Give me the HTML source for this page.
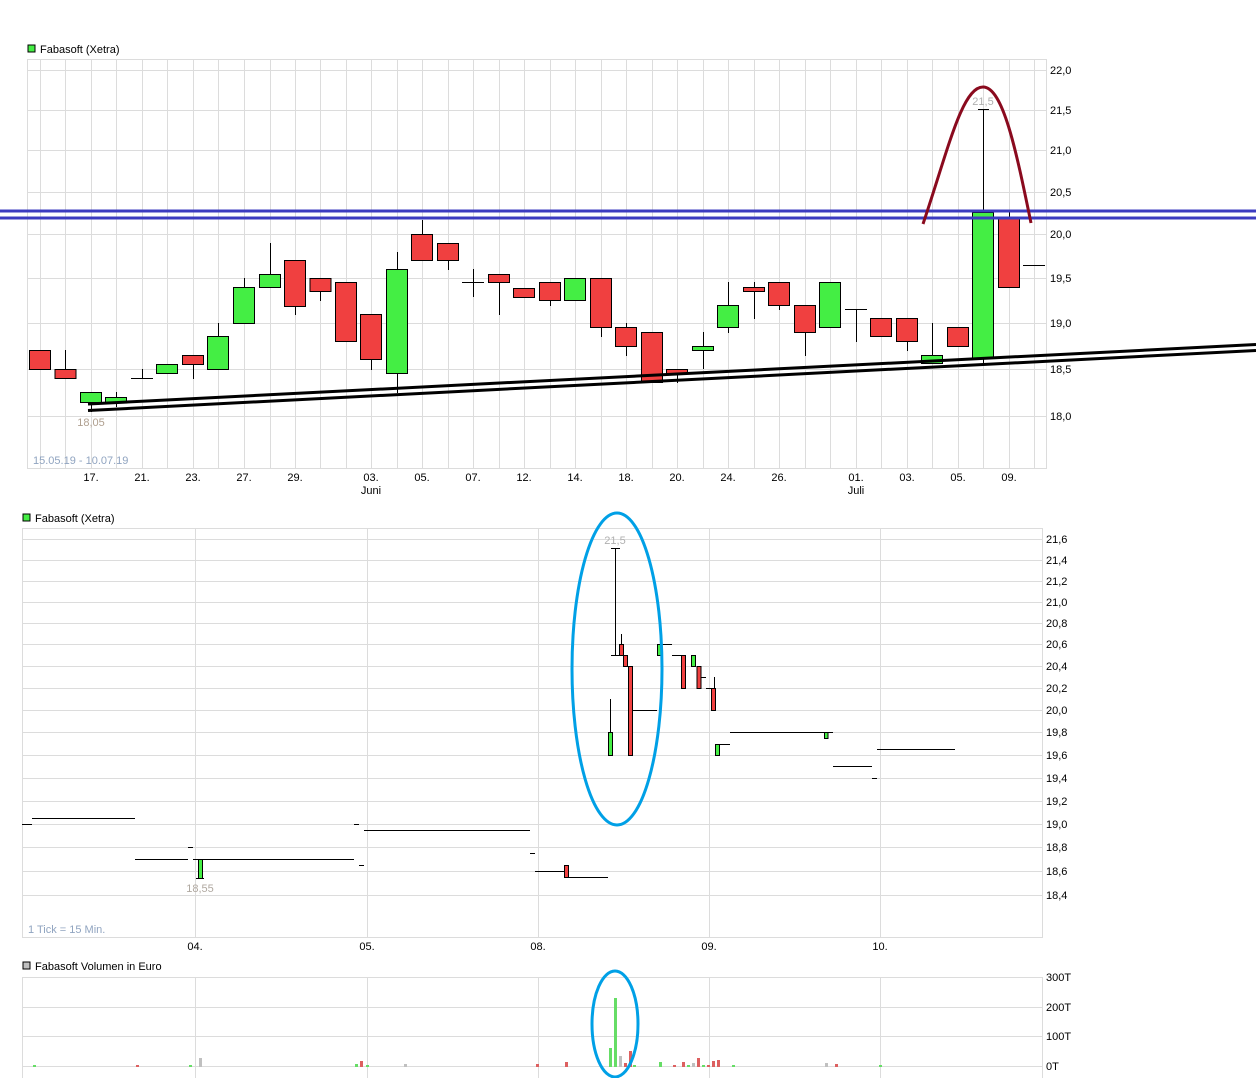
<!DOCTYPE html>
<html><head><meta charset="utf-8"><style>
html,body{margin:0;padding:0;background:#fff;width:1256px;height:1078px;overflow:hidden}
svg{display:block;font-family:"Liberation Sans",sans-serif;font-size:11px}
</style></head><body>
<svg width="1256" height="1078" viewBox="0 0 1256 1078" xmlns="http://www.w3.org/2000/svg">
<!-- ================= TOP CHART ================= -->
<rect x="28" y="45" width="7" height="7" fill="#44ee44" stroke="#000" stroke-width="1"/>
<text x="40" y="53" fill="#000">Fabasoft (Xetra)</text>
<g stroke="#dcdcdc" stroke-width="1" fill="none">
<rect x="27.5" y="59.5" width="1019" height="409"/>
<path d="M28 70.5H1047M28 110.5H1047M28 150.5H1047M28 192.5H1047M28 234.5H1047M28 278.5H1047M28 323.5H1047M28 369.5H1047M28 416.5H1047"/>
<path d="M40.5 59V469M65.5 59V469M91.5 59V469M116.5 59V469M142.5 59V469M167.5 59V469M193.5 59V469M218.5 59V469M244.5 59V469M270.5 59V469M295.5 59V469M320.5 59V469M346.5 59V469M371.5 59V469M397.5 59V469M422.5 59V469M448.5 59V469M473.5 59V469M499.5 59V469M524.5 59V469M550.5 59V469M575.5 59V469M601.5 59V469M626.5 59V469M652.5 59V469M677.5 59V469M703.5 59V469M728.5 59V469M754.5 59V469M779.5 59V469M805.5 59V469M830.5 59V469M856.5 59V469M881.5 59V469M907.5 59V469M932.5 59V469M958.5 59V469M983.5 59V469M1009.5 59V469M1034.5 59V469"/>
</g>
<!-- wicks -->
<g stroke="#000" stroke-width="1" fill="none">
<path d="M65.5 350V378M91.5 392V412M116.5 392V407M142.5 369V378M131 378.5H153M193.5 364V379M218.5 323V369M244.5 278V287M270.5 243V274M295.5 306V315M320.5 291V301M371.5 359V370M397.5 252V393M422.5 220V234M448.5 260V270M473.5 269V297M462 282.5H484M499.5 282V315M550.5 300V306M601.5 327V337M626.5 323V356M677.5 373V383M703.5 332V369M728.5 282V333M754.5 282V319M779.5 305V310M805.5 332V356M856.5 309V342M845 309.5H867M907.5 341V351M932.5 323V363M983.5 109V363M978 109.5H989M1009.5 212V218M1023 265.5H1045"/>
</g>
<!-- bodies -->
<g stroke="#000" stroke-width="1">
<g fill="#f04040">
<rect x="29.5" y="350.5" width="21" height="19"/>
<rect x="55" y="369.5" width="21" height="9"/>
<rect x="182.5" y="355.5" width="21" height="9"/>
<rect x="284.5" y="260.5" width="21" height="46"/>
<rect x="310" y="278.5" width="21" height="13"/>
<rect x="335.5" y="282.5" width="21" height="59"/>
<rect x="360.5" y="314.5" width="21" height="45"/>
<rect x="411.5" y="234.5" width="21" height="26"/>
<rect x="437.5" y="243.5" width="21" height="17"/>
<rect x="488.5" y="274.5" width="21" height="8"/>
<rect x="513.5" y="288.5" width="21" height="9"/>
<rect x="539.5" y="282.5" width="21" height="18"/>
<rect x="590.5" y="278.5" width="21" height="49"/>
<rect x="615.5" y="327.5" width="21" height="19"/>
<rect x="641.5" y="332.5" width="21" height="50"/>
<rect x="666.5" y="369.5" width="21" height="4"/>
<rect x="743.5" y="287.5" width="21" height="4"/>
<rect x="768.5" y="282.5" width="21" height="23"/>
<rect x="794.5" y="305.5" width="21" height="27"/>
<rect x="870.5" y="318.5" width="21" height="18"/>
<rect x="896.5" y="318.5" width="21" height="23"/>
<rect x="947.5" y="327.5" width="21" height="19"/>
<rect x="998.5" y="218.5" width="21" height="69"/>
</g>
<g fill="#44ee44">
<rect x="80.5" y="392.5" width="21" height="10"/>
<rect x="105.5" y="397.5" width="21" height="5"/>
<rect x="156.5" y="364.5" width="21" height="9"/>
<rect x="207.5" y="336.5" width="21" height="33"/>
<rect x="233.5" y="287.5" width="21" height="36"/>
<rect x="259.5" y="274.5" width="21" height="13"/>
<rect x="386.5" y="269.5" width="21" height="104"/>
<rect x="564.5" y="278.5" width="21" height="22"/>
<rect x="692.5" y="346.5" width="21" height="4"/>
<rect x="717.5" y="305.5" width="21" height="22"/>
<rect x="819.5" y="282.5" width="21" height="45"/>
<rect x="921.5" y="355.5" width="21" height="8"/>
<rect x="972.5" y="212.5" width="21" height="146"/>
</g>
</g>
<!-- trendlines -->
<line x1="88" y1="404" x2="1256" y2="344.5" stroke="#000" stroke-width="3"/>
<line x1="88" y1="410.5" x2="1256" y2="350.5" stroke="#000" stroke-width="3"/>
<!-- blue resistance -->
<line x1="0" y1="211" x2="1256" y2="211" stroke="#3c3cc0" stroke-width="3"/>
<line x1="0" y1="218" x2="1256" y2="218" stroke="#3c3cc0" stroke-width="3"/>
<!-- arc -->
<path d="M923 224 C948 150 962 87 983 87 C1003 87 1016 150 1031 223" stroke="#8a0a1e" stroke-width="3" fill="none"/>
<text x="983" y="105" fill="#b0b0b0" text-anchor="middle">21,5</text>
<text x="91" y="426" fill="#b0a090" text-anchor="middle">18,05</text>
<text x="33" y="464" fill="#90a4c0">15.05.19 - 10.07.19</text>
<g fill="#000">
<text x="1050" y="74">22,0</text><text x="1050" y="114">21,5</text><text x="1050" y="154">21,0</text><text x="1050" y="196">20,5</text><text x="1050" y="238">20,0</text><text x="1050" y="282">19,5</text><text x="1050" y="327">19,0</text><text x="1050" y="373">18,5</text><text x="1050" y="420">18,0</text>
</g>
<g fill="#000" text-anchor="middle">
<text x="91" y="481">17.</text><text x="142" y="481">21.</text><text x="193" y="481">23.</text><text x="244" y="481">27.</text><text x="295" y="481">29.</text><text x="371" y="481">03.</text><text x="422" y="481">05.</text><text x="473" y="481">07.</text><text x="524" y="481">12.</text><text x="575" y="481">14.</text><text x="626" y="481">18.</text><text x="677" y="481">20.</text><text x="728" y="481">24.</text><text x="779" y="481">26.</text><text x="856" y="481">01.</text><text x="907" y="481">03.</text><text x="958" y="481">05.</text><text x="1009" y="481">09.</text>
<text x="371" y="494">Juni</text><text x="856" y="494">Juli</text>
</g>

<!-- ================= MIDDLE CHART ================= -->
<rect x="23" y="514" width="7" height="7" fill="#44ee44" stroke="#000" stroke-width="1"/>
<text x="35" y="522" fill="#000">Fabasoft (Xetra)</text>
<g stroke="#dcdcdc" stroke-width="1" fill="none">
<rect x="22.5" y="528.5" width="1020" height="409"/>
<path d="M23 539.5H1043M23 560.5H1043M23 581.5H1043M23 602.5H1043M23 623.5H1043M23 644.5H1043M23 666.5H1043M23 688.5H1043M23 710.5H1043M23 732.5H1043M23 755.5H1043M23 778.5H1043M23 801.5H1043M23 824.5H1043M23 847.5H1043M23 871.5H1043M23 895.5H1043"/>
<path d="M195.5 528V938M367.5 528V938M538.5 528V938M709.5 528V938M880.5 528V938"/>
</g>
<g stroke="#000" stroke-width="1" fill="none">
<path d="M22 824.5H32M32 818.5H135M135 859.5H188M188 847.5H193M193 859.5H354M354 824.5H359M359 865.5H364M364 830.5H530M530 853.5H535M535 871.5H565M569 877.5H608M196 878.5H204M610.5 699V732M615.5 548V655M611 548.5H620M611 655.5H620M621.5 634V644M633 710.5H657M662 644.5H672M672 655.5H681M701 677.5H706M706 688.5H712M714.5 677V688M720 744.5H730M730 732.5H833M833 766.5H872M872 778.5H877M877 749.5H955"/>
</g>
<g stroke="#000" stroke-width="1">
<g fill="#44ee44">
<rect x="198.5" y="859.5" width="4" height="19"/>
<rect x="608.5" y="732.5" width="4" height="23"/>
<rect x="657.5" y="644.5" width="4" height="11"/>
<rect x="691.5" y="655.5" width="4" height="11"/>
<rect x="715.5" y="744.5" width="4" height="11"/>
<rect x="824.5" y="732.5" width="3.5" height="6"/>
</g>
<g fill="#f04040">
<rect x="564.5" y="865.5" width="4" height="12"/>
<rect x="619.5" y="644.5" width="4" height="11"/>
<rect x="623.5" y="655.5" width="4" height="11"/>
<rect x="628.5" y="666.5" width="4" height="89"/>
<rect x="681.5" y="655.5" width="4" height="33"/>
<rect x="697" y="666.5" width="4" height="22"/>
<rect x="711.5" y="688.5" width="4" height="22"/>
</g>
</g>
<ellipse cx="617" cy="669" rx="45" ry="156" fill="none" stroke="#00a0e6" stroke-width="3"/>
<text x="615" y="544" fill="#b0b0b0" text-anchor="middle">21,5</text>
<text x="200" y="892" fill="#b0a8a0" text-anchor="middle">18,55</text>
<text x="28" y="933" fill="#90a4c0">1 Tick = 15 Min.</text>
<g fill="#000">
<text x="1046" y="543">21,6</text><text x="1046" y="564">21,4</text><text x="1046" y="585">21,2</text><text x="1046" y="606">21,0</text><text x="1046" y="627">20,8</text><text x="1046" y="648">20,6</text><text x="1046" y="670">20,4</text><text x="1046" y="692">20,2</text><text x="1046" y="714">20,0</text><text x="1046" y="736">19,8</text><text x="1046" y="759">19,6</text><text x="1046" y="782">19,4</text><text x="1046" y="805">19,2</text><text x="1046" y="828">19,0</text><text x="1046" y="851">18,8</text><text x="1046" y="875">18,6</text><text x="1046" y="899">18,4</text>
</g>
<g fill="#000" text-anchor="middle">
<text x="195" y="950">04.</text><text x="367" y="950">05.</text><text x="538" y="950">08.</text><text x="709" y="950">09.</text><text x="880" y="950">10.</text>
</g>

<!-- ================= VOLUME CHART ================= -->
<rect x="23" y="962" width="7" height="7" fill="#c0c0c0" stroke="#000" stroke-width="1"/>
<text x="35" y="970" fill="#000">Fabasoft Volumen in Euro</text>
<g stroke="#dcdcdc" stroke-width="1" fill="none">
<path d="M22.5 977V1078M1042.5 977V1078M22 977.5H1043M22 1007.5H1043M22 1036.5H1043M22 1066.5H1043"/>
<path d="M195.5 977V1078M367.5 977V1078M538.5 977V1078M709.5 977V1078M880.5 977V1078"/>
</g>
<g>
<rect x="33" y="1065" width="3" height="2" fill="#66dd66"/>
<rect x="136" y="1065" width="3" height="2" fill="#dd6060"/>
<rect x="189" y="1065" width="3" height="2" fill="#66dd66"/>
<rect x="199" y="1058" width="3" height="9" fill="#c0c0c0"/>
<rect x="355" y="1064" width="3" height="3" fill="#66dd66"/>
<rect x="360" y="1061" width="3" height="6" fill="#dd6060"/>
<rect x="366" y="1065" width="3" height="2" fill="#66dd66"/>
<rect x="404" y="1064" width="3" height="3" fill="#c0c0c0"/>
<rect x="536" y="1064" width="3" height="3" fill="#dd6060"/>
<rect x="565" y="1062" width="3" height="5" fill="#dd6060"/>
<rect x="609" y="1048" width="3" height="19" fill="#66dd66"/>
<rect x="614" y="998" width="3" height="69" fill="#66dd66"/>
<rect x="619" y="1056" width="3" height="11" fill="#c0c0c0"/>
<rect x="624" y="1063" width="3" height="4" fill="#dd6060"/>
<rect x="629" y="1051" width="3" height="16" fill="#dd6060"/>
<rect x="633" y="1065" width="3" height="2" fill="#66dd66"/>
<rect x="659" y="1062" width="3" height="5" fill="#66dd66"/>
<rect x="673" y="1065" width="3" height="2" fill="#dd6060"/>
<rect x="682" y="1062" width="3" height="5" fill="#dd6060"/>
<rect x="687" y="1065" width="3" height="2" fill="#66dd66"/>
<rect x="692" y="1063" width="3" height="4" fill="#c0c0c0"/>
<rect x="697" y="1058" width="3" height="9" fill="#dd6060"/>
<rect x="702" y="1065" width="3" height="2" fill="#66dd66"/>
<rect x="707" y="1065" width="3" height="2" fill="#dd6060"/>
<rect x="712" y="1061" width="3" height="6" fill="#dd6060"/>
<rect x="717" y="1060" width="3" height="7" fill="#dd6060"/>
<rect x="732" y="1065" width="3" height="2" fill="#66dd66"/>
<rect x="825" y="1063" width="3" height="4" fill="#c0c0c0"/>
<rect x="835" y="1064" width="3" height="3" fill="#dd6060"/>
<rect x="879" y="1065" width="3" height="2" fill="#66dd66"/>
</g>
<ellipse cx="615" cy="1024" rx="23" ry="53" fill="none" stroke="#00a0e6" stroke-width="3"/>
<g fill="#000">
<text x="1046" y="981">300T</text><text x="1046" y="1011">200T</text><text x="1046" y="1040">100T</text><text x="1046" y="1070">0T</text>
</g>
</svg>
</body></html>
